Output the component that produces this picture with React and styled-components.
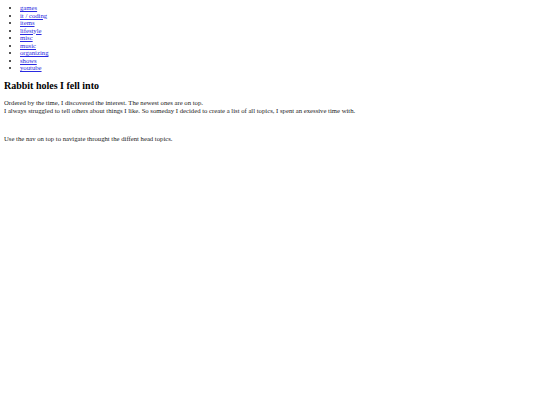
import React from 'react'
import styled, { createGlobalStyle } from 'styled-components'

const GlobalStyle = createGlobalStyle`
    body {
        margin: 4px;
        font-family: "Liberation Serif", "Times New Roman", serif;
        font-size: 6.7px;
        color: #1a1a1a;
        background: #fff;
    }
`

const Nav = styled.ul`
    margin: 0;
    padding-left: 16px;
    list-style: disc;
`

const NavItem = styled.li`
    line-height: 7.5px;
`

const NavLink = styled.a`
    color: #2a2ae0;
    text-decoration: underline;
`

const Heading = styled.h2`
    font-size: 10px;
    font-weight: bold;
    color: #000;
    margin: 8px 0 8px;
`

const Text = styled.p`
    margin: 0 0 ${(p) => p.gap || 0}px;
    line-height: 8px;
`

const topics = ['games', 'it / coding', 'items', 'lifestyle', 'misc', 'music', 'organizing', 'shows', 'youtube']

const App = () => {
    return (
        <>
            <GlobalStyle />
            <Nav>
                {topics.map((t) => (
                    <NavItem key={t}>
                        <NavLink href="#">{t}</NavLink>
                    </NavItem>
                ))}
            </Nav>
            <Heading>Rabbit holes I fell into</Heading>
            <Text>Ordered by the time, I discovered the interest. The newest ones are on top.</Text>
            <Text gap={20}>I always struggled to tell others about things I like. So someday I decided to create a list of all topics, I spent an exessive time with.</Text>
            <Text>Use the nav on top to navigate throught the diffent head topics.</Text>
        </>
    )
}

export default App
